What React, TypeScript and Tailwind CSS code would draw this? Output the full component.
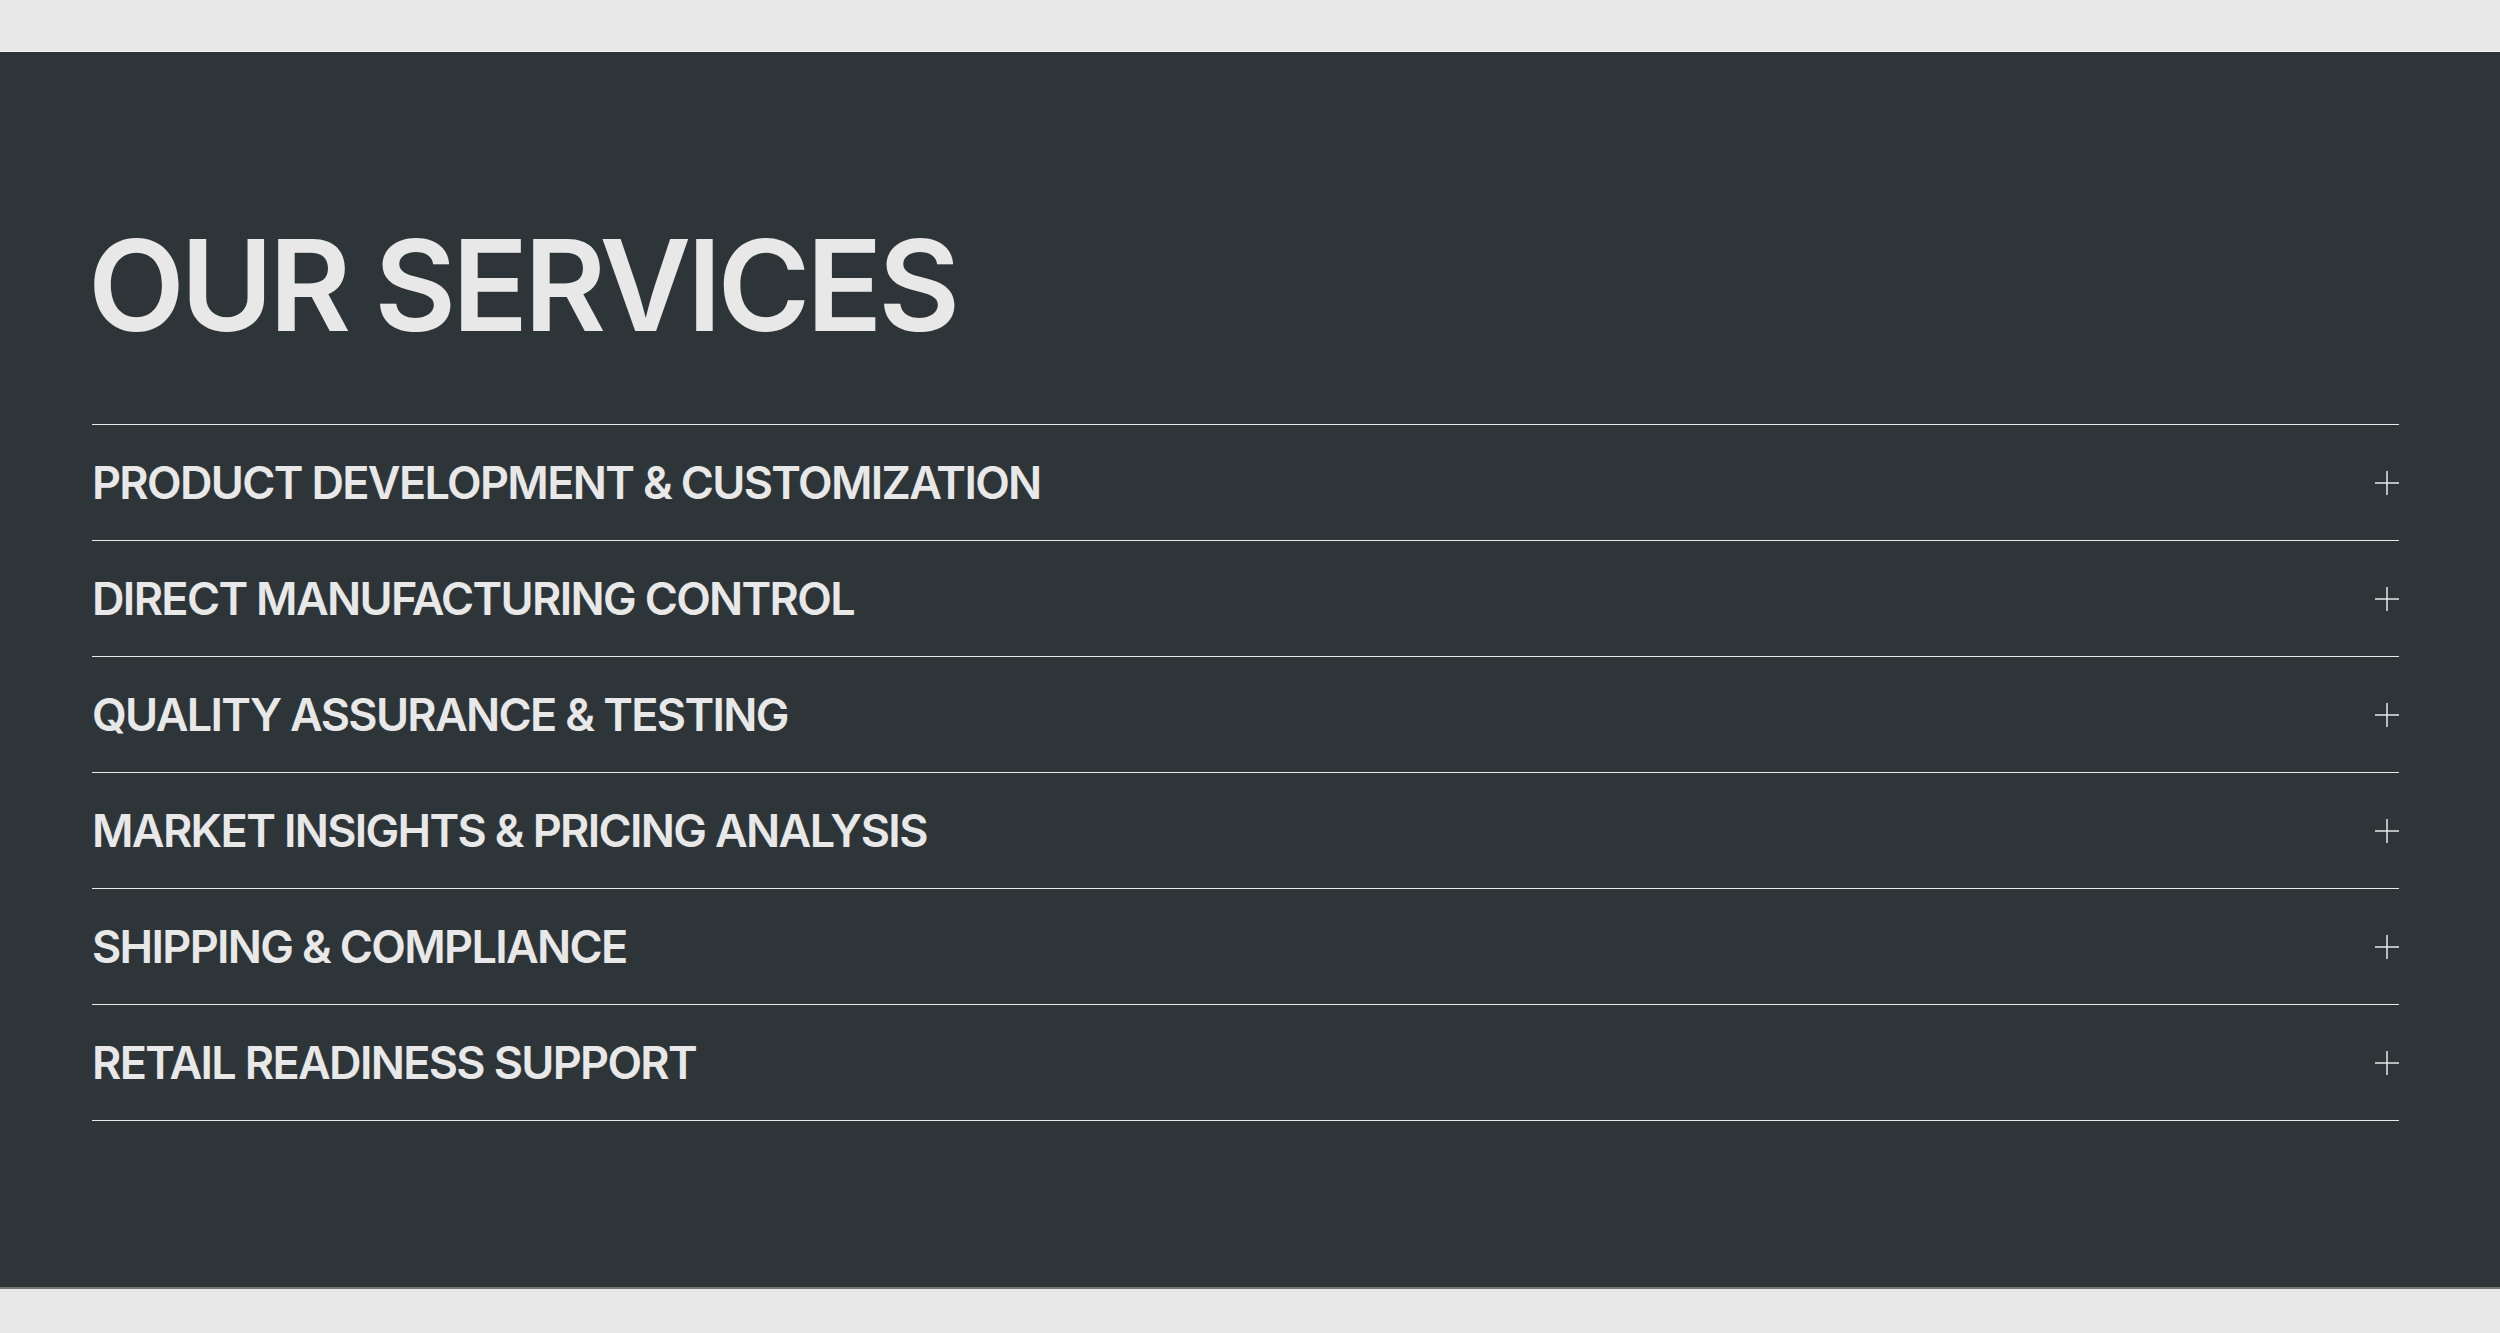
const services = [
  "PRODUCT DEVELOPMENT & CUSTOMIZATION",
  "DIRECT MANUFACTURING CONTROL",
  "QUALITY ASSURANCE & TESTING",
  "MARKET INSIGHTS & PRICING ANALYSIS",
  "SHIPPING & COMPLIANCE",
  "RETAIL READINESS SUPPORT",
];

const PlusIcon = () => (
  <svg width="24" height="24" viewBox="0 0 24 24" className="shrink-0">
    <line x1="12" y1="0" x2="12" y2="24" stroke="#e8e8e8" strokeWidth="1.5" />
    <line x1="0" y1="12" x2="24" y2="12" stroke="#e8e8e8" strokeWidth="1.5" />
  </svg>
);

const App = () => {
  return (
    <div className="min-h-screen bg-[#e8e8e8] pt-[51px] pb-[46px] font-['Inter','Liberation_Sans',sans-serif]">
      <section className="bg-[#2e3538] border-t border-[#f4f4f4] border-b-2 border-b-[#77776f] pl-[92px] pr-[101px] pt-[170px] pb-[166px]">
        <h2 className="text-[126px] leading-none font-semibold tracking-[-0.034em] text-[#e8e8e8] -ml-[4px]">
          OUR SERVICES
        </h2>
        <ul className="mt-[76px] border-t border-[#e8e8e8]">
          {services.map((s) => (
            <li key={s} className="flex h-[116px] items-center justify-between border-b border-[#e8e8e8]">
              <span className="text-[45px] leading-none font-semibold tracking-[-0.037em] text-[#e8e8e8]">{s}</span>
              <PlusIcon />
            </li>
          ))}
        </ul>
      </section>
    </div>
  );
};

export default App;
